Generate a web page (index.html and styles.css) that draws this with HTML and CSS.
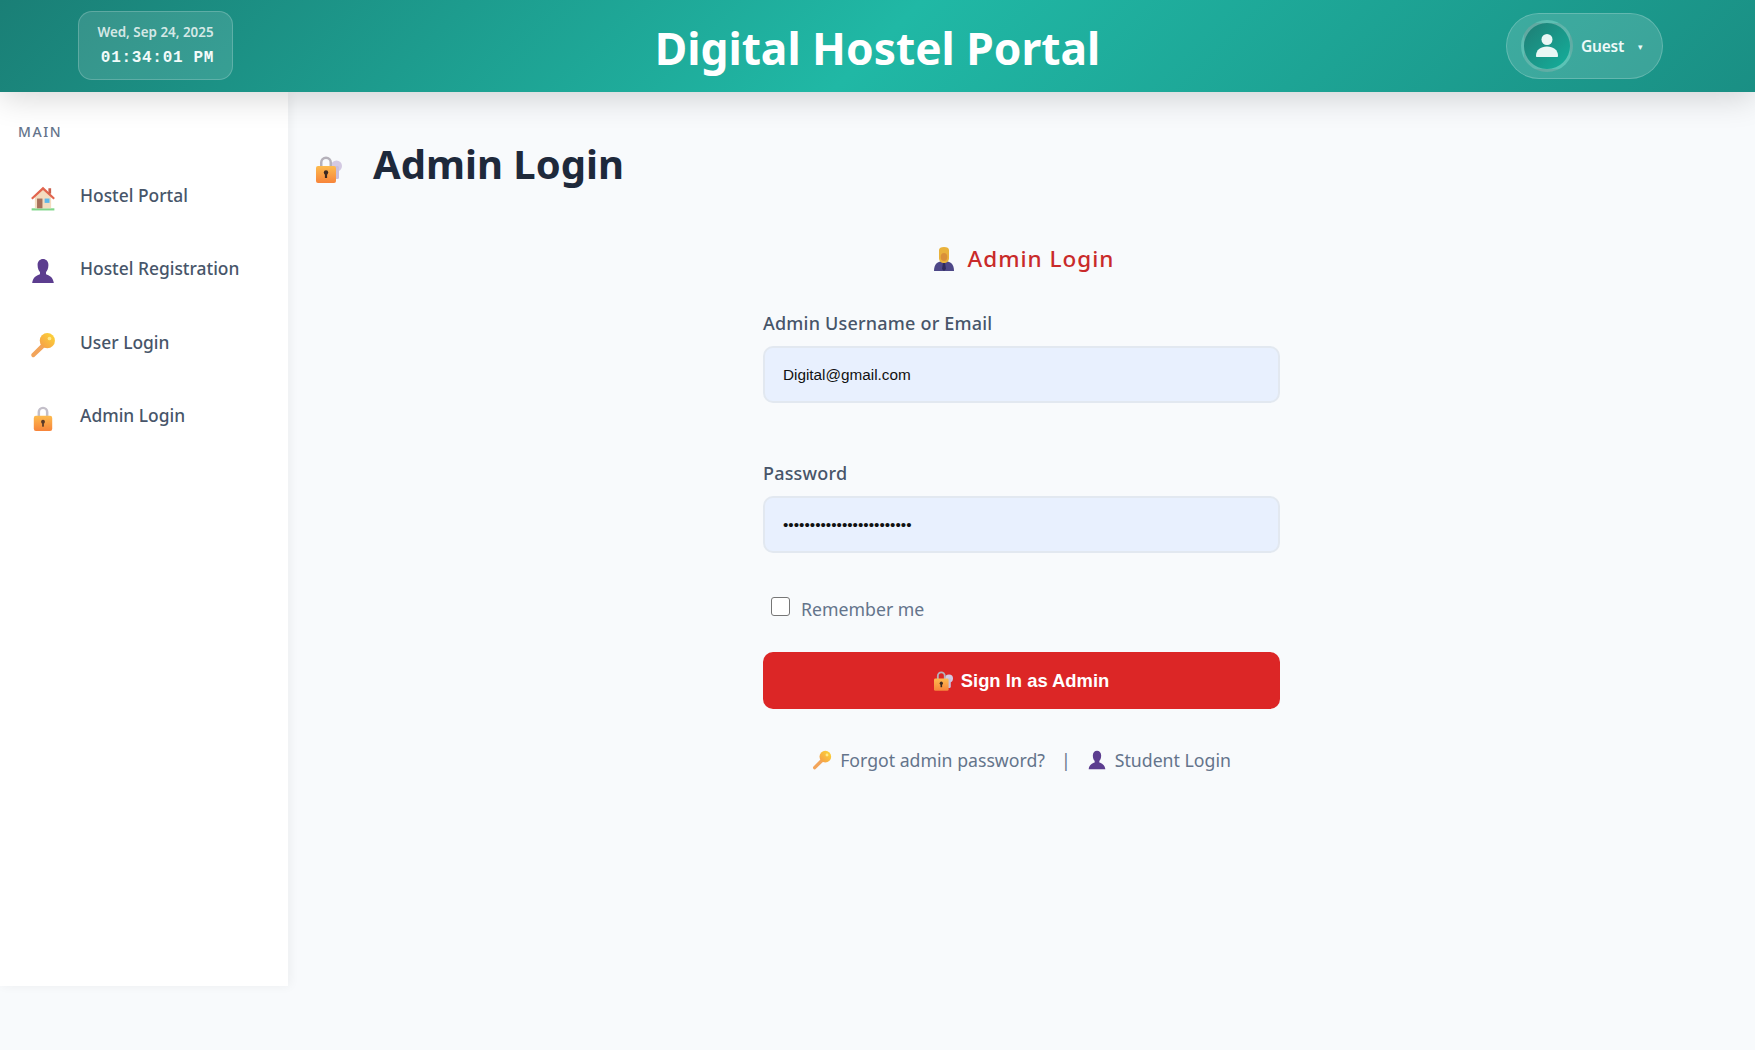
FILE: index.html
```html
<!DOCTYPE html>
<html lang="en">
<head>
    <meta charset="UTF-8">
    <meta name="viewport" content="width=device-width, initial-scale=1.0">
    <title>Admin Login</title>
    <link rel="stylesheet" href="styles.css">
</head>
<body>
    <svg class="icon-defs" aria-hidden="true">
        <defs>
            <linearGradient id="lockBody" x1="0" y1="0" x2="0" y2="1">
                <stop offset="0" stop-color="#fdbb4e"/>
                <stop offset="1" stop-color="#f7843a"/>
            </linearGradient>
            <linearGradient id="keyGold" x1="1" y1="0" x2="0" y2="1">
                <stop offset="0" stop-color="#fdd835"/>
                <stop offset="1" stop-color="#f59a4a"/>
            </linearGradient>
        </defs>
        <symbol id="i-house" viewBox="0 0 24 24">
            <rect x="1.500" y="21.500" width="21" height="2" fill="#7fd68a"/>
            <path d="M4.500 10 12 4l7.500 6v11.500h-15z" fill="#f3dcc0"/>
            <path d="M1 12 12 1.500 23 12l-1.300 1.300L12 4.500 2.300 13.300z" fill="#e2654e"/>
            <rect x="17" y="3" width="2.500" height="5" fill="#c9604c"/>
            <rect x="6.500" y="12.500" width="5" height="9" fill="#a6705a"/>
            <rect x="13.500" y="12.500" width="4.500" height="4" fill="#5db8ea"/>
        </symbol>
        <symbol id="i-bust" viewBox="0 0 24 24">
            <path d="M7 6.500C7 3 9.200 1 12 1s5 2 5 5.500c0 3.500-1.200 5.500-2.200 6.500v2c2.800 1 6.500 2.500 7.200 8H2c.7-5.500 4.400-7 7.200-8v-2C8.200 12 7 10 7 6.500z" fill="#5c3d8f"/>
        </symbol>
        <symbol id="i-key" viewBox="0 0 24 24">
            <path d="M1.500 20 11 10.500l3 3L4 23c-.8.600-1.500.500-2.200-.2s-.9-2-.3-2.800z" fill="#f2a45a"/>
            <circle cx="16" cy="8" r="7" fill="url(#keyGold)"/>
            <circle cx="18" cy="6" r="1.700" fill="#ffe98a"/>
        </symbol>
        <symbol id="i-lock" viewBox="0 0 24 24">
            <path d="M7 11V6.500a5 5 0 0 1 10 0V11h-2.300V6.500a2.700 2.700 0 0 0-5.400 0V11z" fill="#c3bfc9"/>
            <rect x="3.500" y="10" width="17" height="14" rx="2" fill="url(#lockBody)"/>
            <circle cx="12" cy="15.500" r="1.800" fill="#5a3a28"/>
            <rect x="11.200" y="15.500" width="1.600" height="4.500" fill="#5a3a28"/>
        </symbol>
        <symbol id="i-lockkey" viewBox="0 0 26 27">
            <circle cx="20.500" cy="10" r="5.500" fill="#d3c9e2"/>
            <rect x="18" y="10" width="5" height="13" rx="1.500" fill="#c9bedb"/>
            <path d="M4 11V6.500a6 6 0 0 1 12 0V11h-2.500V6.500a3.500 3.500 0 0 0-7 0V11z" fill="#b5b1ba"/>
            <rect x="0" y="10" width="20" height="17" rx="2" fill="url(#lockBody)"/>
            <circle cx="10" cy="16.500" r="2.200" fill="#3d2a22"/>
            <rect x="8.900" y="16.500" width="2.200" height="5.500" fill="#3d2a22"/>
        </symbol>
        <symbol id="i-admin" viewBox="0 0 20 24">
            <path d="M0 24c0-6.500 3-10 10-10s10 3.500 10 10z" fill="#4d4787"/>
            <path d="M8 14h4l-1 2 1 6-2 2-2-2 1-6z" fill="#2f2a5c"/>
            <path d="M5 3c0-2 2-3 5-3s5 1 5 3v8c0 3-2 5-5 5s-5-2-5-5z" fill="#e9b23c"/>
            <ellipse cx="10" cy="10" rx="3.300" ry="4" fill="#d9903a"/>
        </symbol>
        <symbol id="i-person" viewBox="0 0 24 24">
            <circle cx="12" cy="6.500" r="5.500" fill="#e9f7f5"/>
            <path d="M1 23c0-6 4.500-9.500 11-9.500s11 3.500 11 9.500c0 .6-.4 1-1 1H2c-.6 0-1-.4-1-1z" fill="#e9f7f5"/>
        </symbol>
    </svg>

    <header class="topbar">
        <div class="clock">
            <div class="clock-date">Wed, Sep 24, 2025</div>
            <div class="clock-time">01:34:01 PM</div>
        </div>
        <h1 class="brand">Digital Hostel Portal</h1>
        <div class="user-pill">
            <span class="avatar"><svg class="avatar-icon"><use href="#i-person"/></svg></span>
            <span class="user-name">Guest</span>
            <span class="user-caret">&#9662;</span>
        </div>
    </header>

    <div class="layout">
        <aside class="sidebar">
            <div class="sidebar-title">MAIN</div>
            <nav class="side-nav">
                <a class="side-link" href="#"><svg class="side-icon"><use href="#i-house"/></svg>Hostel Portal</a>
                <a class="side-link" href="#"><svg class="side-icon"><use href="#i-bust"/></svg>Hostel Registration</a>
                <a class="side-link" href="#"><svg class="side-icon"><use href="#i-key"/></svg>User Login</a>
                <a class="side-link" href="#"><svg class="side-icon"><use href="#i-lock"/></svg>Admin Login</a>
            </nav>
        </aside>

        <main class="content">
            <h2 class="page-title"><svg class="page-icon"><use href="#i-lockkey"/></svg>Admin Login</h2>

            <form class="login-form">
                <h3 class="form-title"><svg class="form-title-icon"><use href="#i-admin"/></svg>Admin Login</h3>
                <div class="form-group">
                    <label for="adminUser">Admin Username or Email</label>
                    <input type="text" id="adminUser" value="Digital@gmail.com">
                </div>
                <div class="form-group">
                    <label for="adminPass">Password</label>
                    <input type="password" id="adminPass" value="digitalhostelportal12345">
                </div>
                <label class="remember"><input type="checkbox"><span>Remember me</span></label>
                <button type="button" class="submit-button"><svg class="button-icon"><use href="#i-lockkey"/></svg>Sign In as Admin</button>
                <div class="form-links">
                    <a href="#"><svg class="link-icon"><use href="#i-key"/></svg>Forgot admin password?</a>
                    <span class="link-sep">|</span>
                    <a href="#"><svg class="link-icon"><use href="#i-bust"/></svg>Student Login</a>
                </div>
            </form>
        </main>
    </div>
</body>
</html>
```

FILE: styles.css
```css
* {
    box-sizing: border-box;
}

body {
    margin: 0;
    min-height: 1050px;
    background-color: #f8fafc;
    color: #1e293b;
    font-family: 'Noto Sans', 'Open Sans', sans-serif;
}

.icon-defs {
    display: block;
    width: 0;
    height: 0;
}

.topbar {
    position: relative;
    z-index: 2;
    display: grid;
    grid-template-columns: 1fr auto 1fr;
    align-items: center;
    height: 92px;
    background: linear-gradient(135deg, #1a7f76 0%, #20b8a5 50%, #1a8f84 100%);
    box-shadow: 0 6px 32px rgba(0, 0, 0, 0.16);
}

.clock {
    justify-self: start;
    width: 155px;
    height: 69px;
    margin-left: 78px;
    margin-top: -2px;
    padding-top: 11px;
    text-align: center;
    background: rgba(255, 255, 255, 0.12);
    border: 1px solid rgba(255, 255, 255, 0.2);
    border-radius: 14px;
}

.clock-date {
    font-size: 13.400px;
    font-weight: 600;
    line-height: 18px;
    color: rgba(255, 255, 255, 0.8);
}

.clock-time {
    margin-top: 7px;
    padding-left: 4px;
    font-family: 'Liberation Mono', monospace;
    font-size: 16px;
    font-weight: 700;
    line-height: 20px;
    letter-spacing: 0.7px;
    color: #f2fbfa;
}

.brand {
    margin: 0;
    padding-top: 4px;
    font-size: 44.300px;
    font-weight: 700;
    line-height: 88px;
    color: #fff;
    white-space: nowrap;
}

.user-pill {
    justify-self: end;
    display: flex;
    align-items: center;
    width: 157px;
    height: 66px;
    margin-right: 92px;
    padding-left: 14px;
    background: rgba(255, 255, 255, 0.15);
    border: 1px solid rgba(255, 255, 255, 0.2);
    border-radius: 33px;
}

.avatar {
    display: flex;
    align-items: center;
    justify-content: center;
    width: 52px;
    height: 52px;
    border: 3px solid rgba(255, 255, 255, 0.3);
    border-radius: 50%;
    background: linear-gradient(135deg, #1f7d74, #14b09c);
}

.avatar-icon {
    width: 24px;
    height: 26px;
    margin-top: -2px;
}

.user-name {
    margin-left: 8px;
    font-size: 15.500px;
    font-weight: 600;
    letter-spacing: -0.2px;
    color: #eefaf8;
}

.user-caret {
    margin-left: 14px;
    font-size: 9px;
    color: #eefaf8;
}

.layout {
    display: flex;
    align-items: flex-start;
}

.sidebar {
    flex: none;
    width: 288px;
    height: 894px;
    padding: 30px 0 0;
    background-color: #fff;
    box-shadow: 2px 0 10px rgba(0, 0, 0, 0.05);
}

.sidebar-title {
    margin-left: 18px;
    font-size: 14px;
    font-weight: 500;
    line-height: 20px;
    letter-spacing: 1.600px;
    color: #64748b;
}

.side-nav {
    display: flex;
    flex-direction: column;
    margin-top: 16px;
}

.side-link {
    display: flex;
    align-items: center;
    height: 73.500px;
    padding-left: 30px;
    font-size: 17.400px;
    font-weight: 500;
    color: #475569;
    text-decoration: none;
}

.side-icon {
    flex: none;
    width: 26px;
    height: 26px;
    margin-right: 24px;
    margin-top: 6px;
}

.content {
    flex: 1;
    padding: 42px 0 0;
}

.page-title {
    display: flex;
    align-items: center;
    margin: 0 0 0 28px;
    font-size: 40px;
    font-weight: 700;
    line-height: 60px;
    color: #1e293b;
}

.page-icon {
    width: 26px;
    height: 27px;
    margin-right: 31px;
    margin-top: 10px;
}

.login-form {
    width: 517px;
    margin: 47px auto 0;
}

.form-title {
    display: flex;
    align-items: center;
    justify-content: center;
    margin: 0 0 34px;
    padding-left: 5px;
    font-size: 22.500px;
    font-weight: 500;
    line-height: 36px;
    letter-spacing: 1px;
    color: #c92a2a;
}

.form-title-icon {
    width: 20px;
    height: 24px;
    margin-right: 14px;
}

.form-group {
    margin-bottom: 58px;
}

.form-group label {
    display: block;
    margin-bottom: 11px;
    font-size: 18px;
    font-weight: 500;
    line-height: 24px;
    letter-spacing: 0.2px;
    color: #475569;
}

.form-group input {
    display: block;
    width: 100%;
    height: 57px;
    padding: 0 18px;
    font-family: 'Liberation Sans', sans-serif;
    font-size: 15.300px;
    color: #111;
    background-color: #e8f0fe;
    border: 2px solid #e2e8f0;
    border-radius: 10px;
    outline: none;
}

.form-group:nth-of-type(2) {
    margin-bottom: 44px;
}

.remember {
    display: flex;
    align-items: center;
    margin-left: 8px;
    font-size: 17.700px;
    line-height: 24px;
    color: #64748b;
}

.remember input {
    width: 19px;
    height: 19px;
    margin: -6px 11px 0 0;
    appearance: none;
    background-color: #fff;
    border: 1.500px solid #767676;
    border-radius: 3px;
}

.submit-button {
    display: flex;
    align-items: center;
    justify-content: center;
    width: 100%;
    height: 57px;
    margin-top: 31px;
    font-family: 'Liberation Sans', sans-serif;
    font-size: 18.400px;
    font-weight: 700;
    color: #fff;
    background-color: #dc2626;
    border: none;
    border-radius: 10px;
    cursor: pointer;
}

.button-icon {
    width: 19px;
    height: 20px;
    margin-right: 8px;
}

.form-links {
    display: flex;
    align-items: center;
    justify-content: center;
    margin-top: 37px;
    font-size: 17.700px;
    line-height: 28px;
    color: #64748b;
}

.form-links a {
    display: flex;
    align-items: center;
    color: #64748b;
    text-decoration: none;
}

.link-icon {
    width: 20px;
    height: 20px;
    margin-right: 8px;
}

.link-sep {
    margin: 0 16px;
}
```
